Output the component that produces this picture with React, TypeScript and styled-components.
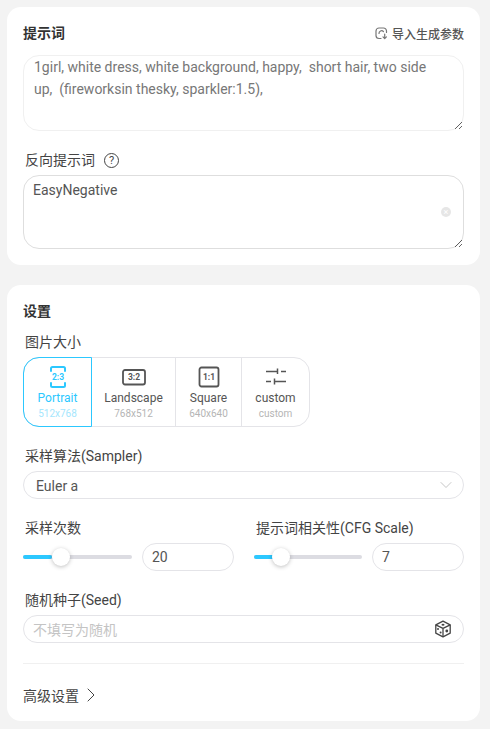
import styled, { createGlobalStyle } from "styled-components";
import { ChevronDown, ChevronRight } from "lucide-react";

const accent = "#2cc8ff";
const line = "#e4e4e8";

const GlobalStyle = createGlobalStyle`
  html, body {
    margin: 0;
    padding: 0;
    background: #f3f3f3;
  }
  * {
    box-sizing: border-box;
  }
  body {
    font-family: Roboto, "Noto Sans CJK SC", sans-serif;
    font-size: 14px;
    color: #444;
  }
`;

const Page = styled.div`
  width: 490px;
  height: 729px;
  padding: 7px 10px 8px 7px;
  display: flex;
  flex-direction: column;
  gap: 20px;
  overflow: hidden;
`;

const Card = styled.section<{ $h: number }>`
  height: ${(p) => p.$h}px;
  background: #fff;
  border-radius: 14px;
  padding: 0 16px;
  display: flex;
  flex-direction: column;
  > * {
    flex-shrink: 0;
  }
`;

const PromptHead = styled.div`
  height: 48px;
  padding-top: 4px;
  display: flex;
  align-items: center;
  justify-content: space-between;
`;

const Title = styled.h2`
  margin: 0;
  font-size: 14px;
  line-height: 18px;
  font-weight: 700;
  color: #333;
`;

const ImportBtn = styled.button`
  display: flex;
  align-items: center;
  gap: 4px;
  padding: 0;
  border: 0;
  background: none;
  font: inherit;
  font-size: 12px;
  font-weight: 500;
  color: #555;
`;

const Area = styled.textarea<{ $h: number; $pt: number; $pl: number; $color: string; $border: string }>`
  display: block;
  width: 100%;
  height: ${(p) => p.$h}px;
  padding: ${(p) => p.$pt}px 24px 0 ${(p) => p.$pl}px;
  border: 1px solid ${(p) => p.$border};
  border-radius: 16px;
  outline: 0;
  resize: vertical;
  font: inherit;
  font-size: 14px;
  line-height: 22px;
  color: ${(p) => p.$color};
  background: #fff;
`;

const AreaWrap = styled.div`
  position: relative;
`;

const ClearDot = styled.span`
  position: absolute;
  right: 13px;
  top: 32px;
  width: 10px;
  height: 10px;
  border-radius: 50%;
  background: #e6e6e6;
  color: #fff;
  font-size: 9px;
  line-height: 10px;
  text-align: center;
`;

const NegLabelRow = styled.div`
  height: 44px;
  padding: 0 0 4px 2px;
  display: flex;
  align-items: flex-end;
  gap: 9px;
  line-height: 22px;
  color: #444;
`;

const Help = styled.span`
  width: 15px;
  height: 15px;
  margin-bottom: 3px;
  border: 1.3px solid #444;
  border-radius: 50%;
  font-size: 11px;
  line-height: 13px;
  text-align: center;
  color: #444;
`;

const SettingsHead = styled.div`
  height: 36px;
  padding-top: 16px;
  display: flex;
  align-items: center;
`;

const FieldLabel = styled.label<{ $h: number }>`
  display: flex;
  align-items: flex-end;
  height: ${(p) => p.$h}px;
  padding: 0 0 4px 2px;
  line-height: 22px;
  color: #444;
  white-space: nowrap;
`;

const Ratios = styled.div`
  width: 287px;
  height: 70px;
  display: flex;
  border: 1px solid ${line};
  border-radius: 16px;
`;

const Ratio = styled.div<{ $w: number; $active?: boolean }>`
  flex: ${(p) => (p.$w ? `0 0 ${p.$w}px` : "1")};
  margin: ${(p) => (p.$active ? "-1px 0 -1px -1px" : "0")};
  padding-top: 7px;
  display: flex;
  flex-direction: column;
  align-items: center;
  border-right: 1px solid ${(p) => (p.$active ? accent : line)};
  border-radius: ${(p) => (p.$active ? "16px 0 0 16px" : "0")};
  ${(p) => p.$active && `border-top: 1px solid ${accent}; border-bottom: 1px solid ${accent}; border-left: 1px solid ${accent};`}
  color: ${(p) => (p.$active ? accent : "#555")};
  &:last-child {
    border-right: 0;
  }
`;

const RatioIcon = styled.svg`
  display: block;
  width: 24px;
  height: 24px;
`;

const RatioName = styled.span`
  font-size: 12px;
  line-height: 18px;
`;

const RatioSize = styled.span<{ $active?: boolean }>`
  font-size: 10px;
  line-height: 14px;
  color: ${(p) => (p.$active ? "#a5e6fd" : "#b5b5b5")};
`;

const Select = styled.div`
  height: 28px;
  padding: 0 7px 0 12px;
  display: flex;
  align-items: center;
  justify-content: space-between;
  border: 1px solid ${line};
  border-radius: 14px;
  color: #555;
`;

const SelectValue = styled.span`
  padding-top: 2px;
`;

const TwoCols = styled.div`
  display: grid;
  grid-template-columns: 211px 210px;
  column-gap: 20px;
`;

const SliderRow = styled.div`
  display: flex;
  align-items: center;
  gap: 10px;
`;

const Track = styled.div<{ $w: number }>`
  position: relative;
  flex: 0 0 ${(p) => p.$w}px;
  height: 4px;
  border-radius: 2px;
  background: #dcdce2;
`;

const Fill = styled.div`
  height: 100%;
  border-radius: 2px;
  background: ${accent};
`;

const Thumb = styled.div`
  position: absolute;
  top: -7px;
  width: 18px;
  height: 18px;
  margin-left: -9px;
  border-radius: 50%;
  background: #fff;
  box-shadow: 0 1px 4px rgba(0, 0, 0, 0.25);
`;

const NumberBox = styled.div`
  flex: 1;
  height: 28px;
  padding-left: 9px;
  display: flex;
  align-items: center;
  border: 1px solid ${line};
  border-radius: 14px;
  color: #555;
`;

const SeedBox = styled.div`
  height: 28px;
  padding: 0 11px 0 9px;
  display: flex;
  align-items: center;
  justify-content: space-between;
  border: 1px solid ${line};
  border-radius: 14px;
  color: #c4c4c4;
`;

const Divider = styled.hr`
  width: 100%;
  margin: 20px 0 0;
  border: 0;
  border-top: 1px solid #f0f0f0;
`;

const Advanced = styled.div`
  height: 57px;
  padding-top: 5px;
  display: flex;
  align-items: center;
  color: #444;
`;

const ImportIcon = () => (
  <svg width="13" height="13" viewBox="0 0 13 13" fill="none" stroke="#777" strokeWidth="1.2" strokeLinecap="round" strokeLinejoin="round">
    <path d="M11.5 5.5V4a3 3 0 0 0-3-3H4a3 3 0 0 0-3 3v4.5a3 3 0 0 0 3 3h2" />
    <path d="M4 6.5a2.6 2.6 0 0 1 4.4-2" />
    <path d="M9.7 7v4.5M8 9.9l1.7 1.7 1.7-1.7" />
  </svg>
);

const DiceIcon = () => (
  <svg width="18" height="18" viewBox="0 0 18 18" fill="none" stroke="#444" strokeWidth="1.3" strokeLinejoin="round">
    <path d="M9 1.2 16.2 4.8v8.4L9 16.8 1.8 13.2V4.8Z" />
    <path d="M1.8 4.8 9 8.4l7.2-3.6M9 8.4v8.4" />
    <g fill="#444" stroke="none">
      <ellipse cx="9" cy="4.8" rx="1.5" ry="1" />
      <circle cx="4" cy="9" r="1" />
      <circle cx="6.6" cy="12.6" r="1" />
      <circle cx="12.8" cy="11" r="1.4" />
    </g>
  </svg>
);

const ratioText = { fontSize: 8.5, fontWeight: 700, fontFamily: "Roboto, sans-serif" };

const PortraitIcon = () => (
  <RatioIcon viewBox="0 0 24 24" fill="none" stroke={accent} strokeWidth="2" strokeLinecap="round">
    <path d="M5 6V3.5A1.5 1.5 0 0 1 6.5 2h11A1.5 1.5 0 0 1 19 3.5V6" />
    <path d="M5 18v2.5A1.5 1.5 0 0 0 6.5 22h11a1.5 1.5 0 0 0 1.5-1.5V18" />
    <text x="12" y="15" textAnchor="middle" fill={accent} stroke="none" style={ratioText}>2:3</text>
  </RatioIcon>
);

const LandscapeIcon = () => (
  <RatioIcon viewBox="0 0 24 24" fill="none" stroke="#555" strokeWidth="1.8">
    <rect x="1" y="5" width="22" height="14.5" rx="2" />
    <text x="12" y="15.3" textAnchor="middle" fill="#555" stroke="none" style={ratioText}>3:2</text>
  </RatioIcon>
);

const SquareIcon = () => (
  <RatioIcon viewBox="0 0 24 24" fill="none" stroke="#555" strokeWidth="1.8">
    <rect x="2.5" y="2.5" width="19" height="19" rx="2" />
    <text x="12" y="15.3" textAnchor="middle" fill="#555" stroke="none" style={ratioText}>1:1</text>
  </RatioIcon>
);

const CustomIcon = () => (
  <RatioIcon viewBox="0 0 24 24" fill="none" stroke="#555" strokeWidth="1.5">
    <path d="M2 6.5h11M13.5 3.5v5.500M17 6.5h5" />
    <path d="M2 16.5h5M10.5 13.5v6M10.5 16.5H22" />
  </RatioIcon>
);

const ratios = [
  { name: "Portrait", size: "512x768", w: 69, icon: <PortraitIcon />, active: true },
  { name: "Landscape", size: "768x512", w: 84, icon: <LandscapeIcon /> },
  { name: "Square", size: "640x640", w: 66, icon: <SquareIcon /> },
  { name: "custom", size: "custom", w: 0, icon: <CustomIcon /> },
];

function Slider({ width, percent, thumb }: { width: number; percent: number; thumb: number }) {
  return (
    <Track $w={width}>
      <Fill style={{ width: `${percent}%` }} />
      <Thumb style={{ left: thumb }} />
    </Track>
  );
}

export default function App() {
  return (
    <>
      <GlobalStyle />
      <Page>
        <Card $h={258}>
          <PromptHead>
            <Title>提示词</Title>
            <ImportBtn>
              <ImportIcon />
              导入生成参数
            </ImportBtn>
          </PromptHead>
          <Area
            $h={76}
            $pt={0}
            $pl={10}
            $color="#777"
            $border="#f0f0f0"
            readOnly
            defaultValue="1girl, white dress, white background, happy,  short hair, two side up,  (fireworksin thesky, sparkler:1.5),"
          />
          <NegLabelRow>
            反向提示词
            <Help>?</Help>
          </NegLabelRow>
          <AreaWrap>
            <Area $h={74} $pt={3} $pl={9} $color="#555" $border="#dedede" readOnly defaultValue="EasyNegative" />
            <ClearDot>×</ClearDot>
          </AreaWrap>
        </Card>

        <Card $h={436}>
          <SettingsHead>
            <Title>设置</Title>
          </SettingsHead>
          <FieldLabel $h={36}>图片大小</FieldLabel>
          <Ratios>
            {ratios.map((r) => (
              <Ratio key={r.name} $w={r.w} $active={r.active}>
                {r.icon}
                <RatioName>{r.name}</RatioName>
                <RatioSize $active={r.active}>{r.size}</RatioSize>
              </Ratio>
            ))}
          </Ratios>
          <FieldLabel $h={44}>采样算法(Sampler)</FieldLabel>
          <Select>
            <SelectValue>Euler a</SelectValue>
            <ChevronDown size={20} strokeWidth={1} color="#bbb" />
          </Select>
          <TwoCols>
            <div>
              <FieldLabel $h={44}>采样次数</FieldLabel>
              <SliderRow>
                <Slider width={109} percent={27} thumb={38} />
                <NumberBox>20</NumberBox>
              </SliderRow>
            </div>
            <div>
              <FieldLabel $h={44}>提示词相关性(CFG Scale)</FieldLabel>
              <SliderRow>
                <Slider width={108} percent={24} thumb={27} />
                <NumberBox>7</NumberBox>
              </SliderRow>
            </div>
          </TwoCols>
          <FieldLabel $h={44}>随机种子(Seed)</FieldLabel>
          <SeedBox>
            不填写为随机
            <DiceIcon />
          </SeedBox>
          <Divider />
          <Advanced>
            高级设置
            <ChevronRight size={24} strokeWidth={1} color="#444" />
          </Advanced>
        </Card>
      </Page>
    </>
  );
}
